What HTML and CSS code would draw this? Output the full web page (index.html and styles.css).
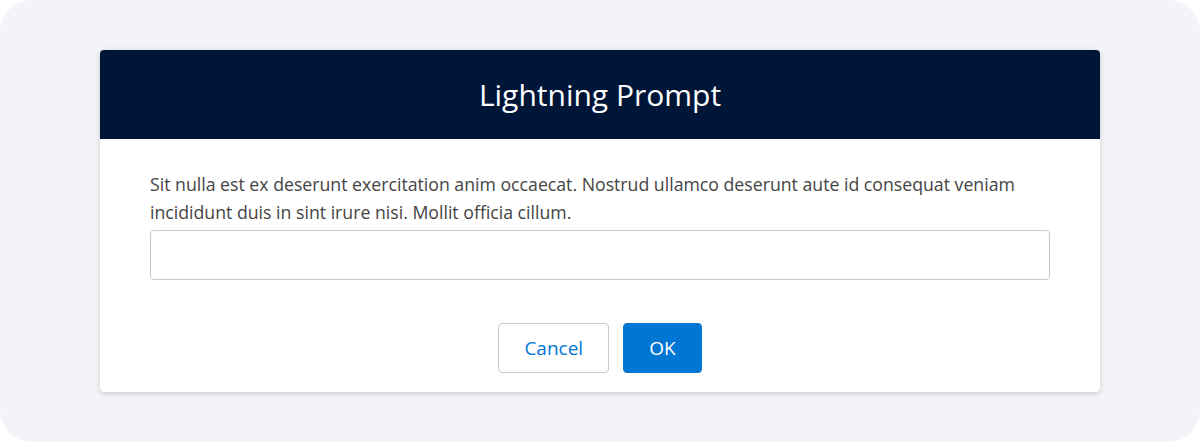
FILE: index.html
```html
<!DOCTYPE html>
<html>
<head>
<meta charset="utf-8">
<link rel="stylesheet" href="styles.css">
</head>
<body>
<div class="stage">
  <div class="modal">
    <header class="modal-header">
      <h1 class="modal-title">Lightning Prompt</h1>
    </header>
    <div class="modal-body">
      <p class="message">Sit nulla est ex deserunt exercitation anim occaecat. Nostrud ullamco deserunt aute id consequat veniam incididunt duis in sint irure nisi. Mollit officia cillum.</p>
      <input class="prompt-input" type="text">
    </div>
    <footer class="modal-footer">
      <button class="btn btn-neutral">Cancel</button>
      <button class="btn btn-brand">OK</button>
    </footer>
  </div>
</div>
</body>
</html>
```
FILE: styles.css
```css
* { box-sizing: border-box; }
html, body { margin: 0; padding: 0; background: #ffffff; }
body { font-family: "Open Sans", "Noto Sans", sans-serif; }
.stage {
  width: 1200px;
  height: 442px;
  background: #f3f4f8;
  border-radius: 32px;
  padding: 50px 100px;
}
.modal {
  background: #ffffff;
  border-radius: 4px;
  box-shadow: 0 2px 4px rgba(0,0,0,0.12), 0 0 12px rgba(0,0,0,0.05);
  overflow: hidden;
  height: 342px;
  display: flex;
  flex-direction: column;
}
.modal-header {
  background: #001639;
  height: 89px;
  display: flex;
  align-items: center;
  justify-content: center;
}
.modal-title {
  margin: 0;
  color: #ffffff;
  font-weight: 400;
  font-size: 30px;
  letter-spacing: 0;
}
.modal-body {
  padding: 31px 50px 0;
}
.message {
  margin: 0 0 4px;
  font-size: 17.7px;
  line-height: 28px;
  color: #444444;
}
.prompt-input {
  display: block;
  width: 100%;
  height: 50px;
  border: 1px solid #c9c9c9;
  border-radius: 4px;
  background: #fff;
  font: inherit;
}
.modal-footer {
  display: flex;
  justify-content: center;
  gap: 14px;
  padding-top: 43px;
}
.btn {
  height: 50px;
  border-radius: 4px;
  font-family: inherit;
  font-size: 19px;
  padding: 0 25px;
}
.btn-neutral {
  background: #fff;
  border: 1px solid #c9c9c9;
  color: #0176d3;
}
.btn-brand {
  background: #0176d3;
  border: 1px solid #0176d3;
  color: #fff;
}
```
